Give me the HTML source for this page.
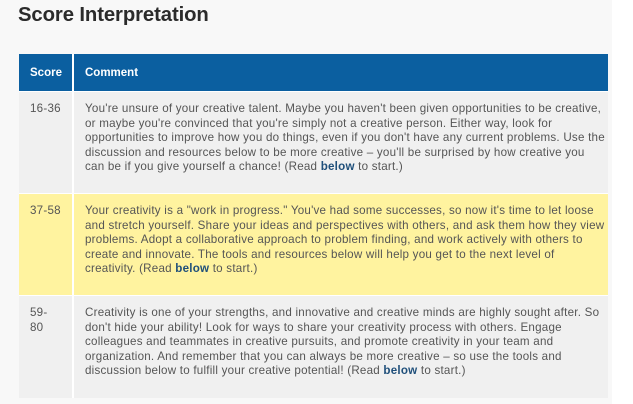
<!DOCTYPE html>
<html><head><style>
html,body{margin:0;padding:0;}
body{width:633px;height:404px;background:#fff;font-family:"Liberation Sans",sans-serif;position:relative;overflow:hidden;}
.wrap{position:absolute;left:0;top:0;width:612px;height:404px;background:#f8f8f8;}
h1{position:absolute;left:18px;top:4px;margin:0;font-size:20.3px;font-weight:bold;color:#2b2b2b;letter-spacing:-0.1px;}
table{position:absolute;left:19px;top:54px;width:589px;border-collapse:collapse;table-layout:fixed;}
th{background:#0b5fa0;color:#fff;font-size:11.5px;font-weight:bold;text-align:left;height:37px;padding:0 0 0 11px;}
th+th,td+td{border-left:2px solid #fff;}
td{vertical-align:top;font-size:11.6px;line-height:14.6px;color:#555;padding:10px 4px 0 11px;white-space:nowrap;letter-spacing:0.23px;}
tr.g td{background:#f0f0f0;}
tr.y td{background:#fff39f;}
tr+tr td{border-top:1px solid #fff;}
b{color:#1f4f7a;}
</style></head><body>
<div class="wrap">
<h1>Score Interpretation</h1>
<table>
<colgroup><col style="width:54px"><col></colgroup>
<tr><th>Score</th><th>Comment</th></tr>
<tr class="g"><td style="height:91px">16-36</td><td>You're unsure of your creative talent. Maybe you haven't been given opportunities to be creative,<br>or maybe you're convinced that you're simply not a creative person. Either way, look for<br>opportunities to improve how you do things, even if you don't have any current problems. Use the<br>discussion and resources below to be more creative – you'll be surprised by how creative you<br>can be if you give yourself a chance! (Read <b>below</b> to start.)</td></tr>
<tr class="y"><td style="height:91px">37-58</td><td>Your creativity is a "work in progress." You've had some successes, so now it's time to let loose<br>and stretch yourself. Share your ideas and perspectives with others, and ask them how they view<br>problems. Adopt a collaborative approach to problem finding, and work actively with others to<br>create and innovate. The tools and resources below will help you get to the next level of<br>creativity. (Read <b>below</b> to start.)</td></tr>
<tr class="g"><td style="height:92px">59-<br>80</td><td>Creativity is one of your strengths, and innovative and creative minds are highly sought after. So<br>don't hide your ability! Look for ways to share your creativity process with others. Engage<br>colleagues and teammates in creative pursuits, and promote creativity in your team and<br>organization. And remember that you can always be more creative – so use the tools and<br>discussion below to fulfill your creative potential! (Read <b>below</b> to start.)</td></tr>
</table>
</div>
</body></html>
